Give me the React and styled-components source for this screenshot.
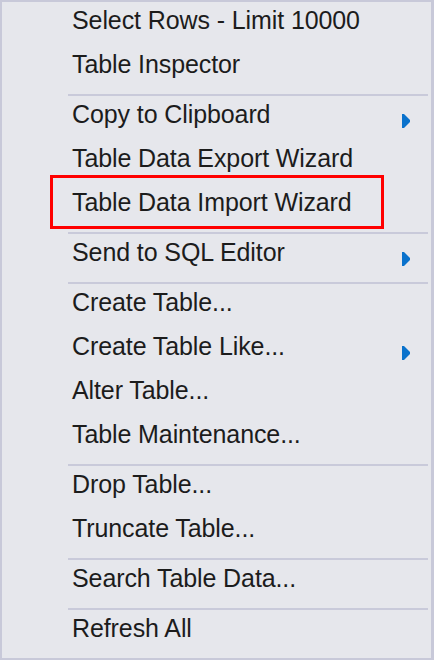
import styled, { createGlobalStyle } from "styled-components";

const GlobalStyle = createGlobalStyle`
    html, body {
        margin: 0;
        padding: 0;
        background: #e6e7ec;
    }
    * {
        box-sizing: border-box;
    }
`;

const menu = [
    { label: "Select Rows - Limit 10000" },
    { label: "Table Inspector" },
    { sep: true },
    { label: "Copy to Clipboard", sub: true },
    { label: "Table Data Export Wizard" },
    { label: "Table Data Import Wizard", marked: true },
    { sep: true },
    { label: "Send to SQL Editor", sub: true },
    { sep: true },
    { label: "Create Table..." },
    { label: "Create Table Like...", sub: true },
    { label: "Alter Table..." },
    { label: "Table Maintenance..." },
    { sep: true },
    { label: "Drop Table..." },
    { label: "Truncate Table..." },
    { sep: true },
    { label: "Search Table Data..." },
    { sep: true },
    { label: "Refresh All" },
];

const SubArrow = () => (
    <Arrow width="8" height="14" viewBox="0 0 8 14">
        <polygon points="0,0 2,0 8,6 8,8 2,14 0,14" fill="#0a72cc" />
    </Arrow>
);

const App = () => {
    return (
        <>
            <GlobalStyle />
            <Menu>
                {menu.map((item, i) =>
                    item.sep ? (
                        <Separator key={i} />
                    ) : (
                        <Item key={i}>
                            <Label>{item.label}</Label>
                            {item.sub && <SubArrow />}
                            {item.marked && <Highlight />}
                        </Item>
                    )
                )}
            </Menu>
        </>
    );
};

export default App;

const Menu = styled.div`
    width: 434px;
    height: 660px;
    background: #e6e7ec;
    border: 2px solid #c8c9d9;
    border-right-width: 3px;
    padding-bottom: 4px;
    display: flex;
    flex-direction: column;
    font-family: "Liberation Sans", Arial, sans-serif;
    font-size: 25px;
    color: #1c1c1c;
`;

const Item = styled.div`
    position: relative;
    height: 44px;
    flex: none;
    display: flex;
    align-items: center;
    justify-content: space-between;
    padding-left: 70px;
    padding-right: 21px;
    padding-bottom: 7px;
`;

const Label = styled.span`
    white-space: nowrap;
    letter-spacing: -0.1px;
`;

const Arrow = styled.svg`
    align-self: flex-start;
    margin-top: 18px;
    flex: none;
`;

const Separator = styled.div`
    flex: none;
    height: 2px;
    margin: 4px 3px 0 66px;
    background: #c9cada;
`;

const Highlight = styled.div`
    position: absolute;
    top: -9px;
    bottom: -1px;
    left: 48px;
    width: 334px;
    border: 3px solid #ff0000;
    pointer-events: none;
`;
